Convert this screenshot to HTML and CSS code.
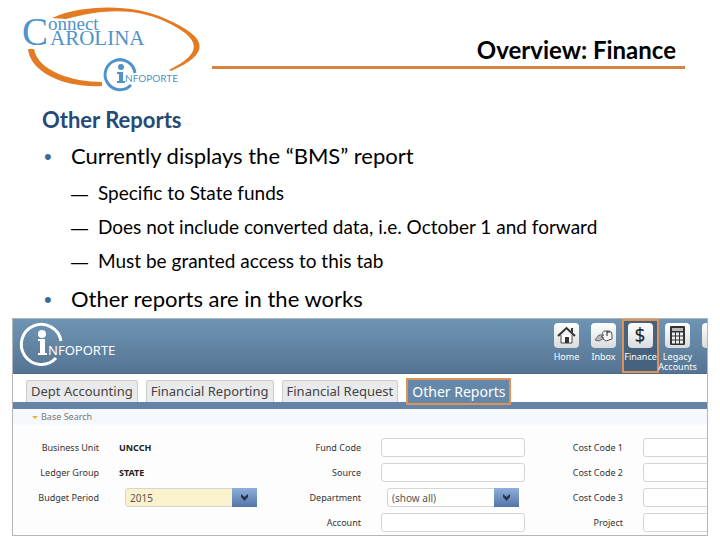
FILE: index.html
```html
<!DOCTYPE html>
<html lang="en">
<head>
    <meta charset="UTF-8">
    <meta name="viewport" content="width=device-width, initial-scale=1.0">
    <title>Overview: Finance</title>
    <link rel="stylesheet" href="styles.css">
</head>
<body>
    <header class="slide-header">
        <svg class="logo" width="190" height="92" viewBox="0 0 190 92" role="img" aria-label="Connect Carolina Infoporte">
            <path d="M30 18 C62 4 112 4 144 19 C188 38 188 54 149 71 L147 70 C181 53 181 39 142 21 C112 8 82 9 44 19 Z" fill="#e57a25"/>
            <path d="M6 49 C8 72 42 88 80 86 L80 82 C50 82 16 71 12 49 Z" fill="#e57a25"/>
            <text x="0" y="45" class="logo-serif" font-size="39">C</text>
            <text x="26" y="30" class="logo-serif" font-size="19">onnect</text>
            <text x="28" y="45" class="logo-serif" font-size="21">AROLINA</text>
            <path d="M113 73 A15 15 0 1 0 109 85" fill="none" stroke="#4f93c9" stroke-width="3"/>
            <circle cx="99" cy="67" r="3" fill="#4f93c9"/>
            <path d="M95 72 H101 V81 H103 V83 H95 V81 H97 V74 H95 Z" fill="#4f93c9"/>
            <text x="103" y="82" class="logo-sans" font-size="10">NFOPORTE</text>
        </svg>
        <h1 class="slide-title">Overview: Finance</h1>
    </header>

    <section class="slide-text">
        <h2>Other Reports</h2>
        <ul class="points">
            <li>Currently displays the “BMS” report
                <ul class="sub-points">
                    <li>Specific to State funds</li>
                    <li>Does not include converted data, i.e. October 1 and forward</li>
                    <li>Must be granted access to this tab</li>
                </ul>
            </li>
            <li>Other reports are in the works</li>
        </ul>
    </section>

    <main class="app">
        <div class="app-header">
            <svg class="app-logo" width="110" height="54" viewBox="0 0 110 54" role="img" aria-label="Infoporte">
                <path d="M48 22 A20 20 0 1 0 43 39" fill="none" stroke="#fff" stroke-width="3"/>
                <circle cx="29" cy="15" r="4" fill="#fff"/>
                <path d="M25 20 H32 V34 H34 V36 H25 V34 H27 V22 H25 Z" fill="#fff"/>
                <text x="35" y="36" class="app-logo-text" font-size="13">NFOPORTE</text>
            </svg>
            <nav class="app-nav">
                <button class="nav-item">
                    <svg class="nav-icon" viewBox="0 0 25 25">
                        <path d="M7 12 V20 H18 V12" fill="#fff" stroke="#444" stroke-width="1"/>
                        <path d="M4 13 L12.500 5 L21 13" fill="none" stroke="#333" stroke-width="2"/>
                        <path d="M17 5 H19 V10 L17 8 Z" fill="#333"/>
                        <rect x="11" y="14" width="4" height="6" fill="#333"/>
                    </svg>
                    <span>Home</span>
                </button>
                <button class="nav-item">
                    <svg class="nav-icon" viewBox="0 0 25 25">
                        <path d="M11 13 Q11 8 14 8 H18 Q21 8 21 12 V16 L15 18 L12 16 Z" fill="#f4f4f4" stroke="#555"/>
                        <path d="M16 8 V13 M16 9 H19" fill="none" stroke="#222" stroke-width="1"/>
                        <path d="M4 17 L8 12 L13 12 L10 14 L13 15 L8 18 Z" fill="#bbb" stroke="#666"/>
                    </svg>
                    <span>Inbox</span>
                </button>
                <button class="nav-item active">
                    <svg class="nav-icon" viewBox="0 0 25 25">
                        <text x="12" y="19" text-anchor="middle" class="dollar" font-size="19">$</text>
                    </svg>
                    <span>Finance</span>
                </button>
                <button class="nav-item">
                    <svg class="nav-icon" viewBox="0 0 25 25">
                        <rect x="5" y="3" width="15" height="19" rx="1" fill="#333"/>
                        <rect x="7" y="5" width="11" height="3" fill="#bbb"/>
                        <path d="M7 11 H10 M11 11 H14 M15 11 H18 M7 15 H10 M11 15 H14 M15 15 H18 M7 19 H10 M11 19 H14 M15 19 H18" stroke="#eee" stroke-width="3"/>
                    </svg>
                    <span>Legacy<br>Accounts</span>
                </button>
                <button class="nav-item" aria-label="More">
                    <svg class="nav-icon" viewBox="0 0 25 25"></svg>
                </button>
            </nav>
        </div>

        <div class="tabs">
            <button class="tab">Dept Accounting</button>
            <button class="tab">Financial Reporting</button>
            <button class="tab">Financial Request</button>
            <button class="tab active">Other Reports</button>
        </div>

        <div class="search-title">Base Search</div>

        <form class="search-form">
            <span class="name">Business Unit</span>
            <strong>UNCCH</strong>
            <label for="fund">Fund Code</label>
            <input type="text" id="fund">
            <label for="cost1">Cost Code 1</label>
            <input type="text" id="cost1">

            <span class="name">Ledger Group</span>
            <strong>STATE</strong>
            <label for="source">Source</label>
            <input type="text" id="source">
            <label for="cost2">Cost Code 2</label>
            <input type="text" id="cost2">

            <label for="period">Budget Period</label>
            <div class="select period">
                <select id="period"><option>2015</option></select>
                <svg class="arrow" viewBox="0 0 25 19"><path d="M9 6 L12.500 9 L16 6 V9 L12.500 13 L9 9 Z"/></svg>
            </div>
            <label for="department">Department</label>
            <div class="select">
                <select id="department"><option>(show all)</option></select>
                <svg class="arrow" viewBox="0 0 25 19"><path d="M9 6 L12.500 9 L16 6 V9 L12.500 13 L9 9 Z"/></svg>
            </div>
            <label for="cost3">Cost Code 3</label>
            <input type="text" id="cost3">

            <label for="account" class="account">Account</label>
            <input type="text" id="account">
            <label for="project">Project</label>
            <input type="text" id="project">
        </form>
    </main>
</body>
</html>
```

FILE: styles.css
```css
* {
    box-sizing: border-box;
}
body {
    margin: 0;
    background: #fff;
    color: #000;
    font-family: Lato, "Liberation Sans", sans-serif;
}
button {
    border: none;
    background: none;
    padding: 0;
    margin: 0;
    font: inherit;
    color: inherit;
    cursor: pointer;
}

/* slide */
.slide-header {
    display: flex;
    align-items: flex-start;
    padding: 0 35px 0 22px;
    height: 98px;
}
.logo {
    flex: none;
}
.logo-serif {
    font-family: "Liberation Serif", serif;
    fill: #4f93c9;
}
.logo-sans {
    font-family: Lato, sans-serif;
    fill: #4f93c9;
}
.slide-title {
    flex: 1;
    margin: 0;
    padding: 34px 9px 0 0;
    height: 69px;
    border-bottom: 3px solid #d6843f;
    text-align: right;
    font-size: 24px;
    line-height: 32px;
}
.slide-text {
    padding: 4px 42px 1px;
}
.slide-text h2 {
    margin: 0;
    color: #254a78;
    font-size: 22px;
    line-height: 36px;
}
.points, .sub-points {
    list-style: none;
    margin: 0;
    padding: 0;
}
.points {
    font-size: 22px;
    line-height: 36px;
}
.points > li {
    padding-left: 29px;
}
.points > li::before {
    content: "•";
    display: inline-block;
    width: 27px;
    margin-left: -27px;
    color: #3d6a92;
    font-family: "Liberation Sans", sans-serif;
    font-size: 22px;
    line-height: 1;
}
.sub-points {
    padding: 2px 0 3px;
    font-size: 19px;
    line-height: 34px;
}
.sub-points li::before {
    content: "—";
    display: inline-block;
    width: 27px;
    font-family: "Liberation Sans", sans-serif;
    font-size: 17px;
    line-height: 1;
}

/* application */
.app {
    margin: 0 12px;
    border: 1px solid #b5b5b5;
    overflow: hidden;
    background: #fdfdfd;
    color: #333;
    font-family: "Noto Sans", sans-serif;
    font-size: 10px;
}
.app-header {
    display: flex;
    justify-content: space-between;
    height: 55px;
    background: linear-gradient(#6f95b4, #557493);
    border-bottom: 1px solid #4c6a88;
}
.app-logo-text {
    font-family: "Noto Sans", sans-serif;
    fill: #fff;
}
.app-nav {
    display: flex;
    width: 159px;
    overflow: hidden;
}
.nav-item {
    display: flex;
    flex-direction: column;
    flex: none;
    align-items: center;
    width: 37px;
    padding-top: 4px;
    color: #fff;
    font-size: 9px;
    line-height: 10px;
    white-space: nowrap;
}
.nav-item.active {
    padding-top: 2px;
    border: 2px solid #dd9256;
    background: #46627e;
}
.nav-icon {
    width: 25px;
    height: 25px;
    margin-bottom: 4px;
    border-radius: 4px;
    background: linear-gradient(#fff, #d9dbde);
}
.dollar {
    font-family: "Noto Sans", sans-serif;
    fill: #222;
}
.tabs {
    display: flex;
    align-items: flex-end;
    gap: 8px;
    height: 35px;
    padding: 0 13px 7px;
    background: linear-gradient(#fff 28px, #6583a6 28px);
}
.tab {
    height: 22px;
    padding: 0 4px;
    border: 1px solid #ccc;
    border-bottom: none;
    border-radius: 3px 3px 0 0;
    background: #e9eaec;
    color: #444;
    font-size: 13px;
    line-height: 21px;
}
.tab.active {
    height: 27px;
    margin-bottom: -3px;
    border: 2px solid #dd9256;
    border-radius: 0;
    background: #6488aa;
    color: #fff;
    font-size: 14px;
}
.search-title {
    padding-left: 19px;
    background: #f5f9fd;
    color: #777;
    font-size: 9px;
    line-height: 16px;
}
.search-title::before {
    content: "";
    display: inline-block;
    margin-right: 3px;
    border: 3px solid transparent;
    border-top-color: #edae3e;
    border-bottom: none;
    vertical-align: middle;
}
.search-form {
    display: grid;
    grid-template-columns: 78px 144px 78px 144px 78px 144px;
    grid-auto-rows: 19px;
    align-items: center;
    gap: 6px 20px;
    padding: 13px 0 3px 8px;
}
.search-form label, .search-form .name {
    text-align: right;
    white-space: nowrap;
    font-size: 9px;
}
.search-form .account {
    grid-column: 3;
}
.search-form strong {
    color: #222;
    font-size: 9px;
}
.search-form input {
    width: 100%;
    height: 19px;
    padding: 0 5px;
    border: 1px solid #d5d5d5;
    border-radius: 3px;
    background: #fff;
    font: inherit;
}
.select {
    display: flex;
    position: relative;
    height: 19px;
    margin: 0 6px;
}
.select select {
    appearance: none;
    width: 100%;
    padding: 0 29px 0 4px;
    border: 1px solid #d5d5d5;
    border-radius: 3px;
    background: #fff;
    color: #555;
    font: inherit;
}
.select.period select {
    background: #f9f2cc;
}
.arrow {
    position: absolute;
    top: 0;
    right: 0;
    width: 25px;
    height: 19px;
    background: linear-gradient(#8fb0d8, #5374a9);
    fill: #24344f;
    pointer-events: none;
}
```
